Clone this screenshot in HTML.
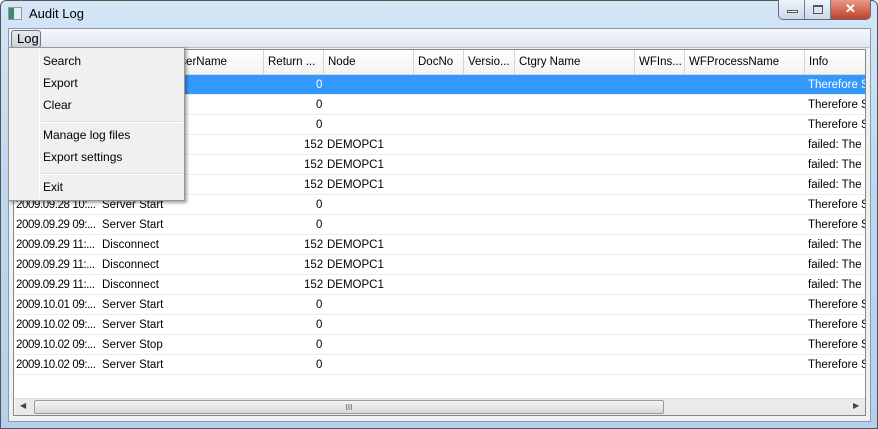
<!DOCTYPE html>
<html><head><meta charset="utf-8"><style>
*{margin:0;padding:0;box-sizing:border-box}
body{width:878px;height:429px;overflow:hidden;font-family:"Liberation Sans",sans-serif;font-size:12px;color:#000;background:#fff;position:relative}
.frame{position:absolute;left:0;top:0;width:878px;height:429px;background:linear-gradient(180deg,#d4e6f6 0%,#c0d9ef 40%,#b5d0ea 100%);border:1px solid #555;border-radius:6px 6px 0 0}
.title{position:absolute;left:29px;top:6px;font-size:13px;color:#000}
.ico{position:absolute;left:8px;top:7px;width:14px;height:13px;border:1px solid #8a9aa8;background:linear-gradient(90deg,#3c8c6c 0 40%,#e8eef2 40%)}
.btns{position:absolute;left:778px;top:0;width:93px;height:20px;border:1px solid #5a6e82;border-top:none;border-radius:0 0 5px 5px;overflow:hidden;display:flex}
.btns div{height:19px;background:linear-gradient(#eef4fa,#c9d9ea);border-right:1px solid #6a7e92;position:relative}
.btns .x{background:linear-gradient(#e89a88,#c0402a);border-right:none;color:#fff;font-weight:bold;font-size:13px;text-align:center;line-height:18px}
.client{position:absolute;left:8px;top:28px;width:863px;height:394px;background:#f0f0f0;border:1px solid #8a9bb0}
.menubar{position:absolute;left:0;top:0;width:861px;height:19px;background:linear-gradient(#f6f8fc,#dfe5f1);border-bottom:1px solid #b6bccc}
.logbtn{position:absolute;left:2px;top:1px;width:30px;height:18px;border:1px solid #6e7584;border-radius:3px;background:linear-gradient(#e6e9ee,#cdd2da);font-size:13px;padding-left:5px;line-height:16px}
.list{position:absolute;left:13px;top:49px;width:853px;height:367px;border:1px solid #828790;background:#fff;overflow:hidden;font-size:11.5px}
.hdr{position:absolute;left:0;top:0;height:25px;width:851px;background:#fff;border-bottom:1px solid #d5d5d5}
.hc{position:absolute;top:0;height:24px;line-height:25px;padding-left:4px;border-right:1px solid #d5d5d5;white-space:nowrap;overflow:hidden;background:linear-gradient(#fff,#f3f3f3)}
.row{position:absolute;left:0;width:851px;height:20px;border-bottom:1px solid #ededed;white-space:nowrap}
.row span{position:absolute;top:4px}
.sel{background:#3399ff;color:#fff}
.hs{position:absolute;left:1px;top:348px;width:851px;height:17px;background:#eaeaea;border-top:1px solid #e0e0e0}
.thumb{position:absolute;left:19px;top:1px;width:630px;height:14px;border:1px solid #9a9a9a;border-radius:2px;background:linear-gradient(#f4f4f4,#d8d8d8);text-align:center;font-size:8px;line-height:13px;color:#555}
.menu{position:absolute;left:8px;top:47px;width:177px;height:154px;background:#f0f0f0;border:1px solid #979797;box-shadow:2px 2px 3px rgba(0,0,0,.35)}
.menu .gut{position:absolute;left:30px;top:2px;width:1px;height:148px;background:#e2e3e3;border-right:1px solid #fff}
.mi{position:absolute;left:34px;font-size:12px}
.sep{position:absolute;left:32px;width:142px;height:2px;border-top:1px solid #e0e0e0;border-bottom:1px solid #fff}
</style></head><body>
<div class="frame"></div>
<div class="ico"></div>
<div class="title">Audit Log</div>
<div class="btns"><div style="width:27px"><i style="position:absolute;left:8px;top:10px;width:11px;height:3px;border:1px solid #555;background:#fff"></i></div><div style="width:26px"><i style="position:absolute;left:8px;top:5px;width:10px;height:9px;border:1px solid #555;border-top-width:2px"></i></div><div class="x" style="width:40px">✕</div></div>
<div class="client"><div class="menubar"><div class="logbtn">Log</div></div></div>
<div class="list">
<div class="hdr">
<div class="hc" style="left:0;width:86px">Date</div>
<div class="hc" style="left:86px;width:68px">Type</div>
<div class="hc" style="left:154px;width:96px">UserName</div>
<div class="hc" style="left:250px;width:60px">Return ...</div>
<div class="hc" style="left:310px;width:90px">Node</div>
<div class="hc" style="left:400px;width:50px">DocNo</div>
<div class="hc" style="left:450px;width:51px">Versio...</div>
<div class="hc" style="left:501px;width:120px">Ctgry Name</div>
<div class="hc" style="left:621px;width:50px">WFIns...</div>
<div class="hc" style="left:671px;width:120px">WFProcessName</div>
<div class="hc" style="left:791px;width:70px">Info</div>
</div>
<div class="row sel" style="top:25px"><span style="left:302px">0</span><span style="left:794px">Therefore S</span></div>
<div class="row" style="top:45px"><span style="left:302px">0</span><span style="left:794px">Therefore S</span></div>
<div class="row" style="top:65px"><span style="left:302px">0</span><span style="left:794px">Therefore S</span></div>
<div class="row" style="top:85px"><span style="left:290px">152</span><span style="left:313px">DEMOPC1</span><span style="left:794px">failed: The</span></div>
<div class="row" style="top:105px"><span style="left:290px">152</span><span style="left:313px">DEMOPC1</span><span style="left:794px">failed: The</span></div>
<div class="row" style="top:125px"><span style="left:290px">152</span><span style="left:313px">DEMOPC1</span><span style="left:794px">failed: The</span></div>
<div class="row" style="top:145px"><span style="left:2px;letter-spacing:-0.4px">2009.09.28 10:...</span><span style="left:88px">Server Start</span><span style="left:302px">0</span><span style="left:794px">Therefore S</span></div>
<div class="row" style="top:165px"><span style="left:2px;letter-spacing:-0.4px">2009.09.29 09:...</span><span style="left:88px">Server Start</span><span style="left:302px">0</span><span style="left:794px">Therefore S</span></div>
<div class="row" style="top:185px"><span style="left:2px;letter-spacing:-0.4px">2009.09.29 11:...</span><span style="left:88px">Disconnect</span><span style="left:290px">152</span><span style="left:313px">DEMOPC1</span><span style="left:794px">failed: The</span></div>
<div class="row" style="top:205px"><span style="left:2px;letter-spacing:-0.4px">2009.09.29 11:...</span><span style="left:88px">Disconnect</span><span style="left:290px">152</span><span style="left:313px">DEMOPC1</span><span style="left:794px">failed: The</span></div>
<div class="row" style="top:225px"><span style="left:2px;letter-spacing:-0.4px">2009.09.29 11:...</span><span style="left:88px">Disconnect</span><span style="left:290px">152</span><span style="left:313px">DEMOPC1</span><span style="left:794px">failed: The</span></div>
<div class="row" style="top:245px"><span style="left:2px;letter-spacing:-0.4px">2009.10.01 09:...</span><span style="left:88px">Server Start</span><span style="left:302px">0</span><span style="left:794px">Therefore S</span></div>
<div class="row" style="top:265px"><span style="left:2px;letter-spacing:-0.4px">2009.10.02 09:...</span><span style="left:88px">Server Start</span><span style="left:302px">0</span><span style="left:794px">Therefore S</span></div>
<div class="row" style="top:285px"><span style="left:2px;letter-spacing:-0.4px">2009.10.02 09:...</span><span style="left:88px">Server Stop</span><span style="left:302px">0</span><span style="left:794px">Therefore S</span></div>
<div class="row" style="top:305px"><span style="left:2px;letter-spacing:-0.4px">2009.10.02 09:...</span><span style="left:88px">Server Start</span><span style="left:302px">0</span><span style="left:794px">Therefore S</span></div>
<div class="hs"><span style="position:absolute;left:5px;top:2px;font-size:8px;color:#444">◀</span><div class="thumb">III</div><span style="position:absolute;left:838px;top:2px;font-size:8px;color:#444">▶</span></div>
</div>
<div class="menu"><div class="gut"></div>
<div class="mi" style="top:6px">Search</div>
<div class="mi" style="top:28px">Export</div>
<div class="mi" style="top:50px">Clear</div>
<div class="sep" style="top:73px"></div>
<div class="mi" style="top:80px">Manage log files</div>
<div class="mi" style="top:102px">Export settings</div>
<div class="sep" style="top:125px"></div>
<div class="mi" style="top:132px">Exit</div>
</div>
</body></html>
